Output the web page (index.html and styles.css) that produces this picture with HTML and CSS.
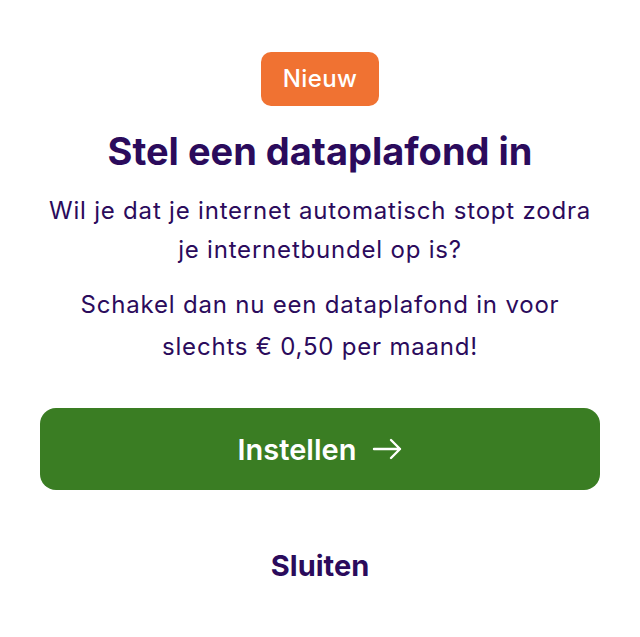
FILE: index.html
```html
<!DOCTYPE html>
<html lang="nl">
<head>
    <meta charset="UTF-8">
    <meta name="viewport" content="width=device-width, initial-scale=1.0">
    <title>Dataplafond</title>
    <link rel="stylesheet" href="styles.css">
</head>
<body>
    <div class="modal">
        <span class="badge">Nieuw</span>
        <h2 class="title">Stel een dataplafond in</h2>
        <p class="text">Wil je dat je internet automatisch stopt zodra je internetbundel op is?</p>
        <p class="text">Schakel dan nu een dataplafond in voor slechts &euro; 0,50 per maand!</p>
        <button class="btn btn-main">Instellen
            <svg class="arrow" width="30" height="22" viewBox="0 0 30 22" fill="none" stroke="#fff" stroke-width="2.4" stroke-linecap="round" stroke-linejoin="round">
                <path d="M2 11h26M19 2l9 9-9 9"/>
            </svg>
        </button>
        <button class="btn btn-close">Sluiten</button>
    </div>
</body>
</html>
```

FILE: styles.css
```css
* { margin: 0; padding: 0; box-sizing: border-box; font-family: Inter, "Noto Sans", sans-serif; }
body { background: #fff; }
.modal { width: 640px; padding: 52px 40px 0; display: flex; flex-direction: column; align-items: center; text-align: center; color: #2b0b5c; }
.badge { display: inline-block; background: #f07232; color: #fff; font-size: 24px; font-weight: 500; padding: 0 22px; height: 54px; line-height: 54px; border-radius: 10px; letter-spacing: 0.4px; }
.title { font-size: 38px; font-weight: 700; margin-top: 22px; line-height: 46px; }
.text { font-size: 24px; line-height: 39px; margin-top: 17px; max-width: 560px; letter-spacing: 0.8px; }
.text + .text { margin-top: 15px; line-height: 42px; }
.btn { border: none; cursor: pointer; font-weight: 600; }
.btn-main { width: 100%; height: 82px; margin-top: 40px; background: #3a7d23; color: #fff; border-radius: 16px; font-size: 29px; display: flex; align-items: center; justify-content: center; gap: 16px; }
.btn-close { background: none; color: #2b0b5c; font-size: 29px; font-weight: 700; margin-top: 58px; }
```
